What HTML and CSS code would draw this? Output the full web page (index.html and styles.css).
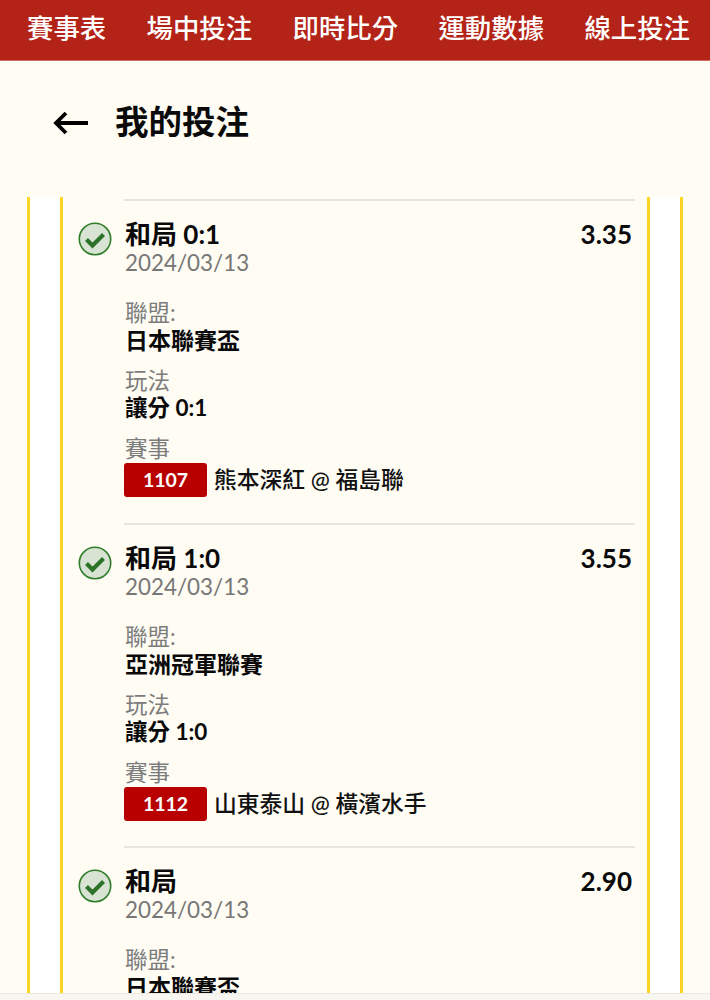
FILE: index.html
```html
<!DOCTYPE html>
<html lang="zh-Hant">
<head>
<meta charset="utf-8">
<title>我的投注</title>
<link rel="stylesheet" href="styles.css">
</head>
<body>
<div class="page">
  <nav class="nav">
    <span>賽事表</span><span>場中投注</span><span>即時比分</span><span>運動數據</span><span>線上投注</span>
  </nav>
  <header class="title">
    <svg class="back" viewBox="0 0 36 24" width="36" height="24"><path d="M35 12H3M13 2 3 12l10 10" fill="none" stroke="#000" stroke-width="3.8"/></svg>
    <h1>我的投注</h1>
  </header>
  <main class="content">
    <div class="frame">
      <div class="rail"></div>
      <div class="list">
        <section class="bet">
          <svg class="ok" viewBox="0 0 34 34" width="34" height="34"><circle cx="17" cy="17" r="15.7" fill="#d9e3d4" stroke="#2e7d2a" stroke-width="1.6"/><path d="M8.5 17.5l6 6 11-11" fill="none" stroke="#2c7228" stroke-width="4.2"/></svg>
          <div class="body">
            <div class="head"><strong class="pick">和局 0:1</strong><strong class="odds">3.35</strong></div>
            <div class="date">2024/03/13</div>
            <div class="label first">聯盟:</div>
            <div class="value">日本聯賽盃</div>
            <div class="label">玩法</div>
            <div class="value small">讓分 0:1</div>
            <div class="label">賽事</div>
            <div class="match"><span class="code">1107</span><span>熊本深紅 @ 福島聯</span></div>
          </div>
        </section>
        <section class="bet">
          <svg class="ok" viewBox="0 0 34 34" width="34" height="34"><circle cx="17" cy="17" r="15.7" fill="#d9e3d4" stroke="#2e7d2a" stroke-width="1.6"/><path d="M8.5 17.5l6 6 11-11" fill="none" stroke="#2c7228" stroke-width="4.2"/></svg>
          <div class="body">
            <div class="head"><strong class="pick">和局 1:0</strong><strong class="odds">3.55</strong></div>
            <div class="date">2024/03/13</div>
            <div class="label first">聯盟:</div>
            <div class="value">亞洲冠軍聯賽</div>
            <div class="label">玩法</div>
            <div class="value small">讓分 1:0</div>
            <div class="label">賽事</div>
            <div class="match"><span class="code">1112</span><span>山東泰山 @ 橫濱水手</span></div>
          </div>
        </section>
        <section class="bet">
          <svg class="ok" viewBox="0 0 34 34" width="34" height="34"><circle cx="17" cy="17" r="15.7" fill="#d9e3d4" stroke="#2e7d2a" stroke-width="1.6"/><path d="M8.5 17.5l6 6 11-11" fill="none" stroke="#2c7228" stroke-width="4.2"/></svg>
          <div class="body">
            <div class="head"><strong class="pick">和局</strong><strong class="odds">2.90</strong></div>
            <div class="date">2024/03/13</div>
            <div class="label first">聯盟:</div>
            <div class="value">日本聯賽盃</div>
          </div>
        </section>
      </div>
      <div class="rail"></div>
    </div>
  </main>
  <div class="bottom"></div>
</div>
</body>
</html>
```
FILE: styles.css
```css
* { box-sizing: border-box; }
html, body { margin: 0; padding: 0; }
body { background: #fffcf4; font-family: Lato, "Noto Sans CJK TC", sans-serif; color: #000; }
.page { position: relative; height: 1000px; overflow: hidden; }
.nav { height: 61px; background: #b32317; border-bottom: 1px solid #cf6a5e; color: #fff; display: flex; justify-content: space-between; align-items: center; padding: 0 20px 3px 27px; font-size: 26.4px; font-weight: 500; line-height: 1; }
.title { height: 136px; display: flex; align-items: flex-start; padding: 42px 0 0 53px; }
.back { margin-top: 8px; margin-right: 26px; flex: none; }
.title h1 { margin: 0; font-size: 33.5px; line-height: 36px; color: #0a0a0a; font-weight: 700; }
.content { padding: 0 27px; }
.frame { display: flex; align-items: stretch; }
.rail { width: 36px; flex: none; background: #fff; border-left: 3px solid #ffd524; border-right: 3px solid #ffd524; }
.list { flex: 1; min-width: 0; padding: 2px 12px 0 15px; }
.bet { display: flex; height: 323.5px; position: relative; padding-top: 20px; }
.bet::before { content: ""; position: absolute; top: 0; left: 46px; right: 0; height: 2px; background: #e7e5de; }
.ok { flex: none; margin-top: 3px; margin-right: 13px; }
.body { flex: 1; min-width: 0; padding-right: 3px; }
.head { display: flex; justify-content: space-between; line-height: 30px; font-size: 26px; }
.pick, .odds { font-weight: 700; color: #0a0a0a; }
.date { font-size: 22.4px; line-height: 26px; color: #777; margin-top: 1px; }
.label { font-size: 22.5px; line-height: 26px; color: #7c7c7c; margin-top: 13px; }
.label.first { margin-top: 24px; }
.value { font-size: 23px; line-height: 30px; font-weight: 700; color: #0a0a0a; margin-top: -1px; }
.value.small { font-size: 22.5px; margin-bottom: 1px; }
.match { display: flex; align-items: center; gap: 7px; font-size: 22.75px; font-weight: 500; line-height: 34px; color: #111; margin-top: 1px; }
.code { width: 83px; height: 34px; margin-left: -1px; background: #b80000; color: #fff; border-radius: 3px; font-size: 19.5px; font-weight: 700; text-align: center; }
.bottom { position: absolute; left: 0; right: 0; bottom: 0; height: 7px; background: #f7f6f1; border-top: 1px solid #e9e8e3; }
```
